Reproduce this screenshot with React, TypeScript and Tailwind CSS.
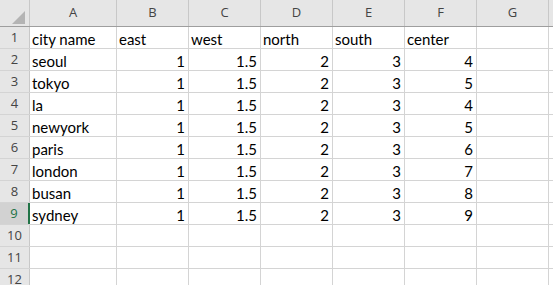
import React from "react";

const cols = ["A", "B", "C", "D", "E", "F", "G"];
const widths = ["w-[87px]", "w-[72px]", "w-[72px]", "w-[72px]", "w-[72px]", "w-[72px]", "w-[72px]"];

const data: (string | number)[][] = [
  ["city name", "east", "west", "north", "south", "center"],
  ["seoul", 1, 1.5, 2, 3, 4],
  ["tokyo", 1, 1.5, 2, 3, 5],
  ["la", 1, 1.5, 2, 3, 4],
  ["newyork", 1, 1.5, 2, 3, 5],
  ["paris", 1, 1.5, 2, 3, 6],
  ["london", 1, 1.5, 2, 3, 7],
  ["busan", 1, 1.5, 2, 3, 8],
  ["sydney", 1, 1.5, 2, 3, 9],
  [],
  [],
  [],
];

export default function App() {
  return (
    <div className="w-[553px] h-[285px] overflow-hidden bg-white font-['Lato',sans-serif] text-[15px] text-black">
      {/* column headers */}
      <div className="flex h-[27px] bg-[#e6e6e6] border-b border-[#9e9e9e]">
        <div className="w-[30px] shrink-0 border-r border-[#c8c8c8] flex items-end justify-end pr-[4px] pb-[2px]">
          <div className="w-0 h-0 border-l-[13px] border-l-transparent border-b-[13px] border-b-[#b4b4b4]" />
        </div>
        {cols.map((c, i) => (
          <div
            key={c}
            className={`${widths[i]} shrink-0 border-r border-[#c8c8c8] flex items-center justify-center font-['Open_Sans',sans-serif] text-[13px] text-[#444]`}
          >
            {c}
          </div>
        ))}
        <div className="flex-1" />
      </div>
      {data.map((row, r) => {
        const sel = r === 8;
        return (
          <div key={r} className="flex h-[22px] border-b border-[#d4d4d4]">
            <div
              className={`w-[30px] shrink-0 flex items-center justify-center font-['Open_Sans',sans-serif] text-[13px] ${
                sel
                  ? "bg-[#d2d2d2] text-[#217346] border-r-2 border-[#217346]"
                  : "bg-[#e6e6e6] text-[#444] border-r border-[#c8c8c8]"
              }`}
            >
              {r + 1}
            </div>
            {cols.map((c, i) => {
              const v = row[i];
              const num = typeof v === "number";
              return (
                <div
                  key={c}
                  className={`${widths[i]} shrink-0 border-r border-[#d4d4d4] flex items-end pb-[1px] leading-none ${
                    num ? "justify-end pr-[3px]" : "justify-start pl-[2px]"
                  }`}
                >
                  {v ?? ""}
                </div>
              );
            })}
            <div className="flex-1" />
          </div>
        );
      })}
    </div>
  );
}
